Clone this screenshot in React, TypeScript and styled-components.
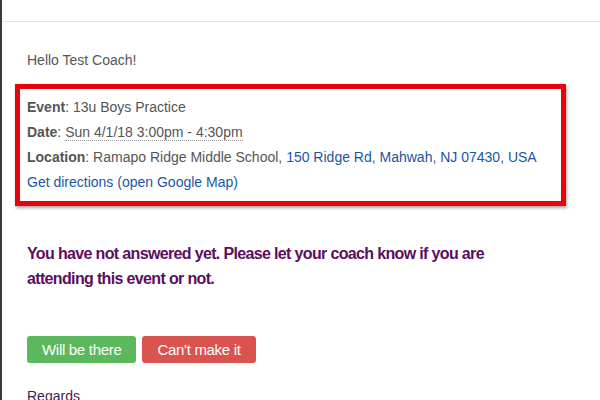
import React from "react";
import styled, { createGlobalStyle } from "styled-components";

const Global = createGlobalStyle`
  html, body { margin: 0; padding: 0; background: #fff; }
  body { font-family: "Liberation Sans", Arial, Helvetica, sans-serif; }
`;

const Frame = styled.div`
  width: 600px;
  height: 400px;
  overflow: hidden;
  border-left: 2px solid #3a3a3a;
  box-sizing: border-box;
  background: #fff;
`;

const TopBar = styled.div`
  height: 21px;
  border-bottom: 1px solid #e3e3e3;
`;

const Content = styled.div`
  padding: 0 13px;
  display: flex;
  flex-direction: column;
  align-items: flex-start;
`;

const Text = styled.p`
  margin: 0;
  padding: 0 12px;
  font-size: 14px;
  line-height: 20px;
  color: #555;
`;

const Greeting = styled(Text)`
  margin-top: 28px;
`;

const InfoBox = styled.div`
  margin-top: 14px;
  border: 5px solid #e8030c;
  padding: 6px 7px 6px 7px;
  width: 551px;
  box-sizing: border-box;
  box-shadow: 1px 2px 3px rgba(0, 0, 0, 0.35);
  display: flex;
  flex-direction: column;
`;

const InfoLine = styled.div`
  font-size: 14px;
  line-height: 25px;
  color: #555;
  white-space: nowrap;
`;

const Label = styled.b`
  font-weight: bold;
  color: #555;
`;

const DateText = styled.span`
  border-bottom: 1px dotted #999;
`;

const Link = styled.a`
  color: #1a55a6;
  text-decoration: none;
`;

const Heading = styled.h2`
  margin: 35px 0 0;
  padding: 0 12px;
  font-size: 16px;
  letter-spacing: -0.65px;
  line-height: 25px;
  font-weight: bold;
  color: #5c0d5e;
  width: 470px;
`;

const Buttons = styled.div`
  display: flex;
  align-items: flex-start;
  gap: 6px;
  padding: 0 12px;
  margin-top: 45px;
`;

const Button = styled.button<{ $tone: "ok" | "no" }>`
  font-family: "Liberation Sans", Arial, sans-serif;
  font-size: 15px;
  letter-spacing: -0.3px;
  line-height: 27px;
  color: #fff;
  border: none;
  border-radius: 3px;
  height: 27px;
  padding: 0 15px;
  background: ${(p) => (p.$tone === "ok" ? "#5cb85c" : "#d9534f")};
  cursor: pointer;
`;

const Regards = styled(Text)`
  margin-top: 23px;
  color: #3e1b52;
`;

export default function App() {
  return (
    <>
      <Global />
      <Frame>
        <TopBar />
        <Content>
          <Greeting>Hello Test Coach!</Greeting>
          <InfoBox>
            <InfoLine>
              <Label>Event</Label>: 13u Boys Practice
            </InfoLine>
            <InfoLine>
              <Label>Date</Label>: <DateText>Sun 4/1/18 3:00pm - 4:30pm</DateText>
            </InfoLine>
            <InfoLine>
              <Label>Location</Label>: Ramapo Ridge Middle School,{" "}
              <Link href="#">150 Ridge Rd, Mahwah, NJ 07430, USA</Link>
            </InfoLine>
            <InfoLine>
              <Link href="#">Get directions (open Google Map)</Link>
            </InfoLine>
          </InfoBox>
          <Heading>
            You have not answered yet. Please let your coach know if you are
            attending this event or not.
          </Heading>
          <Buttons>
            <Button $tone="ok">Will be there</Button>
            <Button $tone="no">Can't make it</Button>
          </Buttons>
          <Regards>Regards</Regards>
        </Content>
      </Frame>
    </>
  );
}
